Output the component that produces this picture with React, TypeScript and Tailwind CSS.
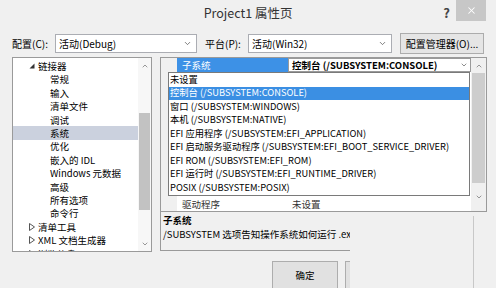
import { ChevronDown, ChevronUp, X } from "lucide-react";

const treeItems = [
  { label: "链接器", level: 0, open: true },
  { label: "常规", level: 1 },
  { label: "输入", level: 1 },
  { label: "清单文件", level: 1 },
  { label: "调试", level: 1 },
  { label: "系统", level: 1, selected: true },
  { label: "优化", level: 1 },
  { label: "嵌入的 IDL", level: 1 },
  { label: "Windows 元数据", level: 1 },
  { label: "高级", level: 1 },
  { label: "所有选项", level: 1 },
  { label: "命令行", level: 1 },
  { label: "清单工具", level: 0 },
  { label: "XML 文档生成器", level: 0 },
  { label: "浏览信息", level: 0 },
];

// rows under the open list are covered, so only first and last carry text
const gridRows = [
  { name: "子系统", value: "控制台 (/SUBSYSTEM:CONSOLE)" },
  { name: "", value: "" },
  { name: "", value: "" },
  { name: "", value: "" },
  { name: "", value: "" },
  { name: "", value: "" },
  { name: "", value: "" },
  { name: "", value: "" },
  { name: "", value: "" },
  { name: "", value: "" },
  { name: "驱动程序", value: "未设置" },
];

const options = [
  "未设置",
  "控制台 (/SUBSYSTEM:CONSOLE)",
  "窗口 (/SUBSYSTEM:WINDOWS)",
  "本机 (/SUBSYSTEM:NATIVE)",
  "EFI 应用程序 (/SUBSYSTEM:EFI_APPLICATION)",
  "EFI 启动服务驱动程序 (/SUBSYSTEM:EFI_BOOT_SERVICE_DRIVER)",
  "EFI ROM (/SUBSYSTEM:EFI_ROM)",
  "EFI 运行时 (/SUBSYSTEM:EFI_RUNTIME_DRIVER)",
  "POSIX (/SUBSYSTEM:POSIX)",
];

function Arrow({ open }: { open?: boolean }) {
  return open ? (
    <svg width="6" height="6" viewBox="0 0 6 6" className="shrink-0">
      <polygon points="5.5,0.5 5.5,5.5 0.5,5.5" fill="#333" />
    </svg>
  ) : (
    <svg width="6" height="8" viewBox="0 0 6 8" className="shrink-0">
      <polygon points="0.5,0.5 5.5,4 0.5,7.5" fill="none" stroke="#555" strokeWidth="1" />
    </svg>
  );
}

function Combo({ text, className }: { text: string; className: string }) {
  return (
    <div className={`h-[19px] bg-white border border-[#abadb3] flex items-center pl-[3px] pr-[4px] ${className}`}>
      <span className="flex-1 text-[10px]">{text}</span>
      <ChevronDown size={9} strokeWidth={2} className="text-[#555]" />
    </div>
  );
}

export default function App() {
  return (
    <div className="w-[496px] h-[288px] overflow-hidden bg-[#f0f0f0] text-black font-['Noto_Sans_CJK_SC','Noto_Sans',sans-serif]">
      {/* title bar */}
      <div className="h-[30px] flex items-start">
        <div className="flex-1" />
        <div className="pt-[4px] text-[12.5px] text-[#333] whitespace-nowrap">Project1 属性页</div>
        <div className="flex-1 flex justify-end items-start">
          <span className="mt-[3px] mr-[6px] text-[13px] font-bold text-[#444]">?</span>
          <div className="w-[30px] h-[21px] bg-[#c7c7c7] flex items-center justify-center mr-[10px]">
            <X size={11} strokeWidth={2.2} className="text-white" />
          </div>
        </div>
      </div>

      {/* config row */}
      <div className="mt-[3px] h-[21px] pl-[12px] flex items-center text-[10px]">
        <span className="w-[43px]">配置(C):</span>
        <Combo text="活动(Debug)" className="w-[142px]" />
        <span className="ml-[8px] w-[43px]">平台(P):</span>
        <Combo text="活动(Win32)" className="w-[144px]" />
        <div className="ml-[8px] w-[84px] h-[21px] bg-[#e5e5e5] border border-[#acacac] flex items-center justify-center">
          配置管理器(O)...
        </div>
      </div>

      {/* main */}
      <div className="mt-[3px] flex">
        {/* tree */}
        <div className="ml-[12px] w-[140px] h-[195px] bg-white border border-[#9a9a9a] flex text-[9.5px]">
          <div className="flex-1 pt-[1.5px] overflow-hidden">
            {treeItems.map((t) => (
              <div
                key={t.label}
                className={`h-[13.4px] flex items-center whitespace-nowrap ${t.selected ? "bg-[#cbd1de]" : ""} ${t.level === 0 ? "pl-[16px] gap-[3px]" : "pl-[37px]"}`}
              >
                {t.level === 0 && <Arrow open={t.open} />}
                <span>{t.label}</span>
              </div>
            ))}
          </div>
          <div className="w-[13px] bg-[#f7f7f7] flex flex-col items-center">
            <div className="h-[16px] flex items-center">
              <ChevronUp size={8} strokeWidth={2} className="text-[#666]" />
            </div>
            <div className="mt-[39px] w-[11px] h-[97px] bg-[#c2c2c2]" />
            <div className="flex-1" />
            <div className="h-[14px] flex items-center">
              <ChevronDown size={8} strokeWidth={2} className="text-[#666]" />
            </div>
          </div>
        </div>

        {/* property grid + description */}
        <div className="ml-[8px] w-[327px] flex flex-col">
          <div className="relative h-[155px] border border-[#9a9a9a] bg-white flex text-[9.5px]">
            <div className="flex-1 flex flex-col overflow-hidden">
              {gridRows.map((r, i) => (
                <div key={i} className="h-[13.9px] flex items-stretch whitespace-nowrap">
                  <div className="w-[16px] bg-[#f0f0f0]" />
                  <div className={`w-[111px] flex items-center pl-[5px] ${i === 0 ? "bg-[#3d91e6] text-white" : "text-[#333]"}`}>
                    {r.name}
                  </div>
                  {i === 0 ? (
                    <div className="flex-1 bg-white border border-[#9a9a9a] flex items-center pl-[3px]">
                      <span className="flex-1 font-bold">{r.value}</span>
                      <div className="w-[12px] flex items-center justify-center">
                        <ChevronDown size={8} strokeWidth={2} className="text-[#555]" />
                      </div>
                    </div>
                  ) : (
                    <div className="flex-1 flex items-center pl-[4px] text-[#333]">{r.value}</div>
                  )}
                </div>
              ))}
            </div>
            <div className="w-[15px] bg-[#f0f0f0] flex flex-col items-center">
              <div className="h-[15px] flex items-center">
                <ChevronUp size={8} strokeWidth={2} className="text-[#666]" />
              </div>
              <div className="w-[13px] h-[110px] bg-[#cdcdcd]" />
              <div className="flex-1 flex items-center">
                <ChevronDown size={8} strokeWidth={2} className="text-[#666]" />
              </div>
            </div>

            {/* open dropdown list */}
            <div className="absolute left-[7px] top-[14px] w-[302px] h-[124px] bg-white border border-[#7a7a7a] text-[9.3px]">
              {options.map((o, i) => (
                <div
                  key={o}
                  className={`h-[13.5px] flex items-center pl-[1px] whitespace-nowrap ${i === 1 ? "bg-[#3b8fe3] text-white" : ""}`}
                >
                  {o}
                </div>
              ))}
            </div>
          </div>

          <div className="flex h-[76px]">
            <div className="w-[190px] flex flex-col">
              <div className="h-[40px] border-l border-b border-[#9a9a9a] overflow-hidden pl-[2px] pt-[1px] text-[9.5px] whitespace-nowrap">
                <div className="h-[14px] flex items-center font-bold">子系统</div>
                <div className="h-[14px] flex items-center">/SUBSYSTEM 选项告知操作系统如何运行 .exe</div>
              </div>
              <div className="mt-[10px] flex overflow-hidden">
                <div className="ml-[112px] w-[66px] h-[28px] shrink-0 bg-[#e1e1e1] border border-[#adadad] flex items-center justify-center text-[9.5px]">
                  确定
                </div>
                <div className="ml-[7px] w-[66px] h-[28px] shrink-0 bg-[#e1e1e1] border border-[#adadad]" />
              </div>
            </div>
            <div className="ml-[123px] mt-[4px] w-px bg-[#c8c8c8]" />
          </div>
        </div>
      </div>
    </div>
  );
}
